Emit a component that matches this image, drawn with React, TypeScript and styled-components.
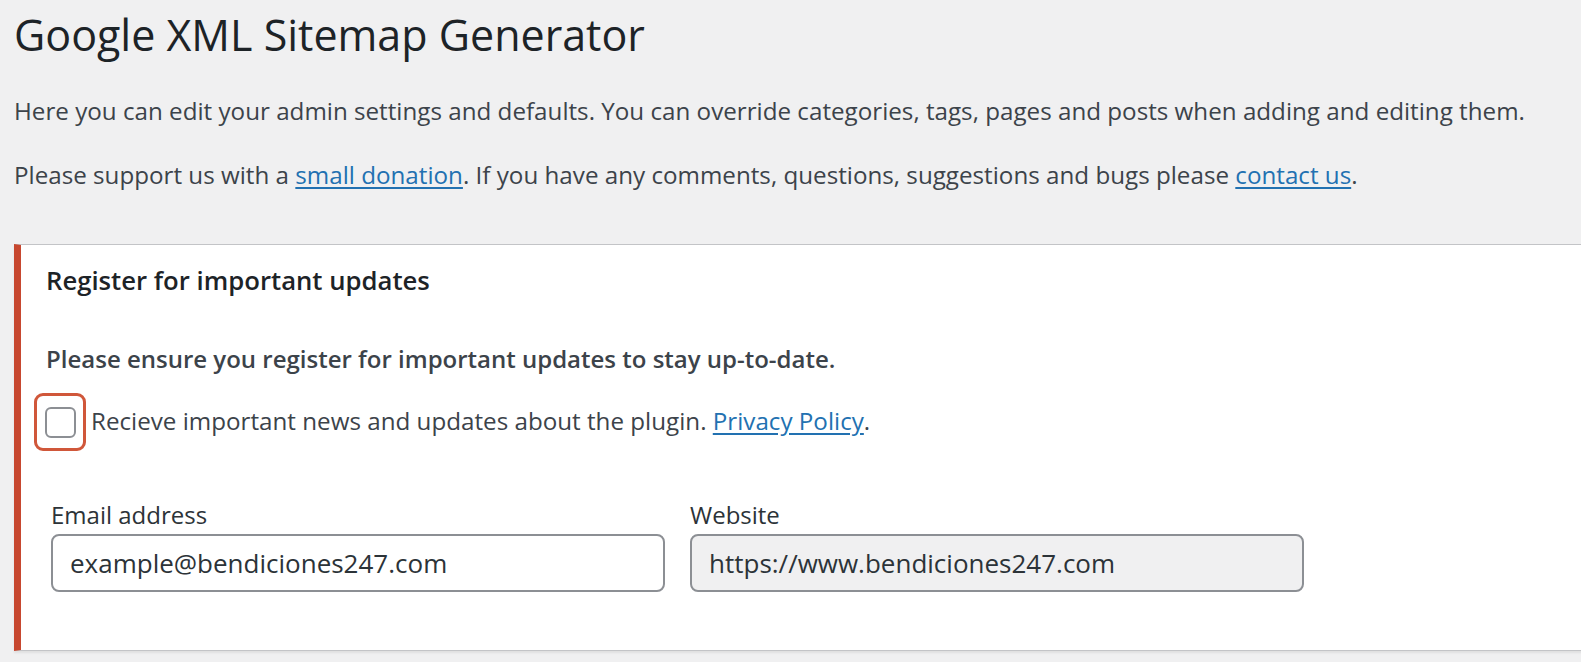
import React from "react";
import styled, { createGlobalStyle } from "styled-components";

const Global = createGlobalStyle`
  html, body { margin: 0; padding: 0; background: #f0f0f1; }
  body { font-family: "Open Sans", "Noto Sans", sans-serif; color: #3c434a; }
`;

const Page = styled.div`
  padding: 0 0 0 14px;
  overflow: hidden;
  height: 662px;
  box-sizing: border-box;
`;

const Title = styled.h1`
  margin: 0;
  padding-top: 6px;
  font-size: 43px;
  line-height: 58px;
  font-weight: 400;
  color: #1d2327;
  height: 64px;
`;

const Para = styled.p`
  margin: 0;
  font-size: 24.2px;
  line-height: 64px;
  height: 64px;
  color: #3c434a;
  white-space: nowrap;
  &:first-of-type { margin-top: 9px; }
`;

const Link = styled.a`
  color: #2271b1;
  text-decoration: underline;
  text-underline-offset: 3px;
`;

const Card = styled.section`
  margin-top: 37px;
  margin-right: -20px;
  background: #fff;
  border: 1px solid #c3c4c7;
  border-left: 7px solid #c7472f;
  box-shadow: 0 2px 2px rgba(0, 0, 0, 0.07);
  padding: 0 0 0 25px;
  height: 407px;
  box-sizing: border-box;
`;

const CardTitle = styled.h2`
  margin: 0;
  padding-top: 18px;
  font-size: 25.7px;
  line-height: 36px;
  font-weight: 600;
  color: #1d2327;
`;

const Strong = styled.p`
  margin: 42px 0 0;
  font-size: 24px;
  line-height: 36px;
  font-weight: 600;
  color: #3c434a;
`;

const CheckRow = styled.div`
  display: flex;
  align-items: center;
  margin-top: 16px;
  margin-left: -12px;
`;

const Focus = styled.span`
  display: flex;
  align-items: center;
  justify-content: center;
  width: 52px;
  height: 58px;
  border: 3px solid #d0573a;
  border-radius: 9px;
  box-sizing: border-box;
  margin-right: 5px;
`;

const Box = styled.span`
  display: block;
  width: 31px;
  height: 31px;
  border: 2px solid #8c8f94;
  border-radius: 6px;
  box-sizing: border-box;
  background: #fff;
`;

const CheckLabel = styled.span`
  font-size: 24.2px;
  line-height: 36px;
  color: #3c434a;
  margin-bottom: 2px;
`;

const Fields = styled.div`
  display: flex;
  gap: 25px;
  margin-top: 47px;
  margin-left: 5px;
`;

const Field = styled.div`
  display: flex;
  flex-direction: column;
  width: 614px;
`;

const FieldLabel = styled.label`
  font-size: 24px;
  line-height: 34px;
  color: #2c3338;
  margin-bottom: 2px;
`;

const Input = styled.div<{ $disabled?: boolean }>`
  height: 58px;
  box-sizing: border-box;
  border: 2px solid #8c8f94;
  border-radius: 8px;
  background: ${(p) => (p.$disabled ? "#f0f0f1" : "#fff")};
  padding: 0 17px;
  display: flex;
  align-items: center;
  font-size: 26px;
  color: #2c3338;
`;

export default function App() {
  return (
    <>
      <Global />
      <Page>
        <Title>Google XML Sitemap Generator</Title>
        <Para>
          Here you can edit your admin settings and defaults. You can override categories, tags, pages and posts when adding and editing them.
        </Para>
        <Para>
          Please support us with a <Link href="#">small donation</Link>. If you have any comments, questions, suggestions and bugs please{" "}
          <Link href="#">contact us</Link>.
        </Para>
        <Card>
          <CardTitle>Register for important updates</CardTitle>
          <Strong>Please ensure you register for important updates to stay up-to-date.</Strong>
          <CheckRow>
            <Focus>
              <Box />
            </Focus>
            <CheckLabel>
              Recieve important news and updates about the plugin. <Link href="#">Privacy Policy</Link>.
            </CheckLabel>
          </CheckRow>
          <Fields>
            <Field>
              <FieldLabel>Email address</FieldLabel>
              <Input>example@bendiciones247.com</Input>
            </Field>
            <Field>
              <FieldLabel>Website</FieldLabel>
              <Input $disabled>https://www.bendiciones247.com</Input>
            </Field>
          </Fields>
        </Card>
      </Page>
    </>
  );
}
